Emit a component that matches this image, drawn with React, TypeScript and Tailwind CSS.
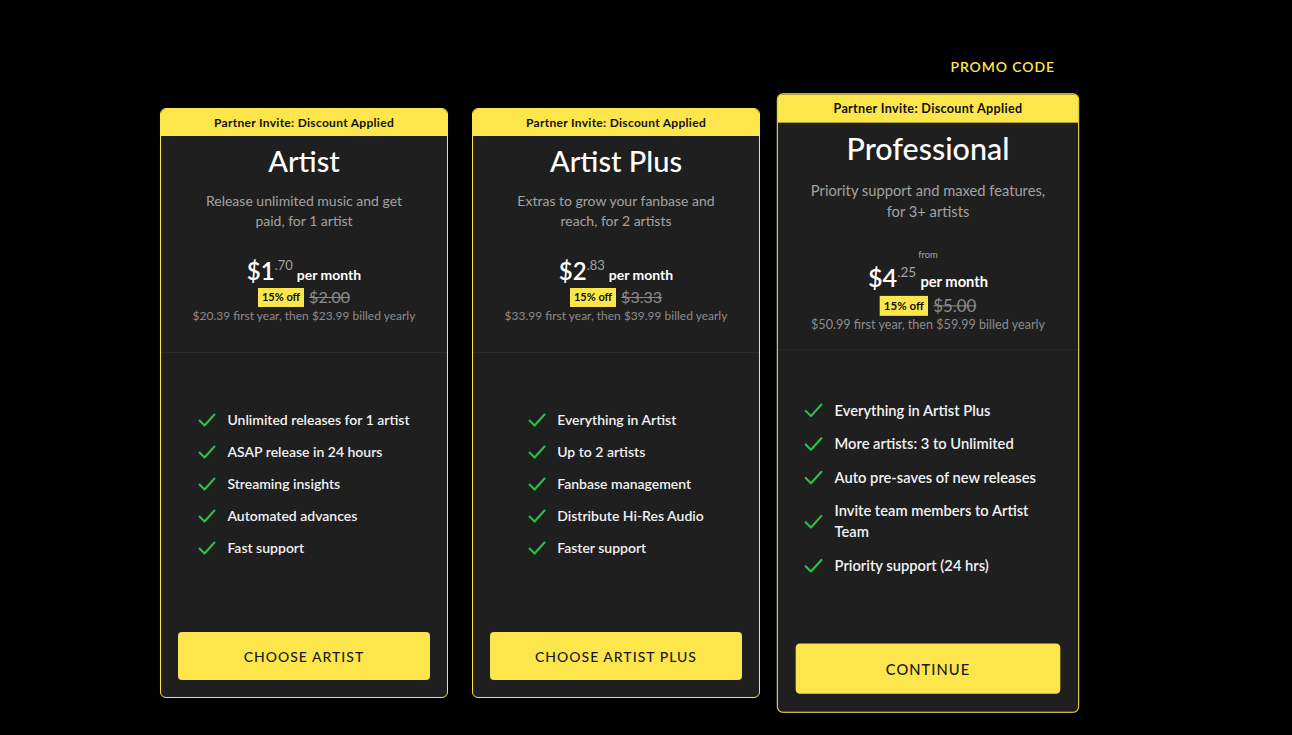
import React from 'react';

const FONT = { fontFamily: 'Lato, "Noto Sans", sans-serif' };

type Plan = {
  name: string;
  blurb: string;
  from?: boolean;
  whole: string;
  cents: string;
  was: string;
  billed: string;
  features: string[];
  cta: string;
  featured?: boolean;
};

const PLANS: Plan[] = [
  {
    name: 'Artist',
    blurb: 'Release unlimited music and get paid, for 1 artist',
    whole: '$1',
    cents: '.70',
    was: '$2.00',
    billed: '$20.39 first year, then $23.99 billed yearly',
    features: ['Unlimited releases for 1 artist', 'ASAP release in 24 hours', 'Streaming insights', 'Automated advances', 'Fast support'],
    cta: 'Choose Artist',
  },
  {
    name: 'Artist Plus',
    blurb: 'Extras to grow your fanbase and reach, for 2 artists',
    whole: '$2',
    cents: '.83',
    was: '$3.33',
    billed: '$33.99 first year, then $39.99 billed yearly',
    features: ['Everything in Artist', 'Up to 2 artists', 'Fanbase management', 'Distribute Hi-Res Audio', 'Faster support'],
    cta: 'Choose Artist Plus',
  },
  {
    name: 'Professional',
    blurb: 'Priority support and maxed features, for 3+ artists',
    from: true,
    whole: '$4',
    cents: '.25',
    was: '$5.00',
    billed: '$50.99 first year, then $59.99 billed yearly',
    features: ['Everything in Artist Plus', 'More artists: 3 to Unlimited', 'Auto pre-saves of new releases', 'Invite team members to Artist Team', 'Priority support (24 hrs)'],
    cta: 'Continue',
    featured: true,
  },
];

const Check = () => (
  <svg width="18" height="14" viewBox="0 0 18 14" fill="none" className="shrink-0">
    <path d="M1.5 7.5 L6.5 12.5 L16.5 1.5" stroke="#2fbf4f" strokeWidth="2" strokeLinecap="round" strokeLinejoin="round" />
  </svg>
);

const PlanCard: React.FC<{ plan: Plan }> = ({ plan }) => (
  <div
    className={`w-[288px] h-[590px] shrink-0 rounded-md border border-[#fde64b] bg-[#1f1f1f] flex flex-col overflow-hidden ${plan.featured ? 'scale-105' : ''}`}
  >
    <div className="h-[27px] bg-[#fde64b] flex items-center justify-center text-[12px] tracking-[0.3px] font-bold text-[#111]">
      Partner Invite: Discount Applied
    </div>

    {/* header: name, blurb, pricing */}
    <div className="h-[217px] border-b border-[#2b2b2b] flex flex-col items-center pt-[8px] px-6">
      <h2 className="text-[29px] leading-[34px] font-medium text-white">{plan.name}</h2>
      <p className="mt-[13px] max-w-[226px] text-center text-[14px] leading-[20px] text-[#a3a3a3]">{plan.blurb}</p>
      {plan.from && <div className="mt-[24px] text-[9px] leading-[14px] text-[#a3a3a3]">from</div>}
      <div className={`${plan.from ? 'mt-[1px]' : 'mt-[26px]'} flex items-baseline`}>
        <span className="text-[24px] leading-[28px] font-semibold text-white">{plan.whole}</span>
        <span className="self-start text-[13px] leading-[16px] text-[#a3a3a3]">{plan.cents}</span>
        <span className="ml-[4px] text-[14px] font-bold text-white">per month</span>
      </div>
      <div className="mt-[2px] flex items-center gap-[5px]">
        <span className="bg-[#fde64b] px-[4px] h-[19px] flex items-center text-[11px] font-bold text-[#111]">15% off</span>
        <span className="text-[16px] leading-[20px] text-[#8c8c8c] line-through">{plan.was}</span>
      </div>
      <div className="mt-[1px] text-[12px] leading-[16px] text-[#8c8c8c]">{plan.billed}</div>
    </div>

    {/* feature list */}
    <div className="flex-1 flex items-center justify-center pb-[18px]">
      <ul className="flex flex-col gap-[12px] max-w-[236px]">
        {plan.features.map((f) => (
          <li key={f} className="flex items-center gap-[11px] text-[14px] leading-[20px] font-semibold text-[#f2f2f2]">
            <Check />
            <span>{f}</span>
          </li>
        ))}
      </ul>
    </div>

    <div className="px-[17px] pb-[17px]">
      <button className="w-full h-[48px] rounded bg-[#fde64b] text-[14px] uppercase tracking-[1px] text-[#1a1a1a] font-medium">
        {plan.cta}
      </button>
    </div>
  </div>
);

export default function App() {
  return (
    <div className="min-h-[735px] bg-black pt-[57px] pl-[160px]" style={FONT}>
      <div className="w-[912px] flex justify-end pr-[17px]">
        <a className="text-[14px] leading-[20px] font-semibold tracking-[0.9px] text-[#fde64b]">PROMO CODE</a>
      </div>
      <div className="mt-[31px] flex gap-[24px]">
        {PLANS.map((p) => (
          <PlanCard key={p.name} plan={p} />
        ))}
      </div>
    </div>
  );
}
